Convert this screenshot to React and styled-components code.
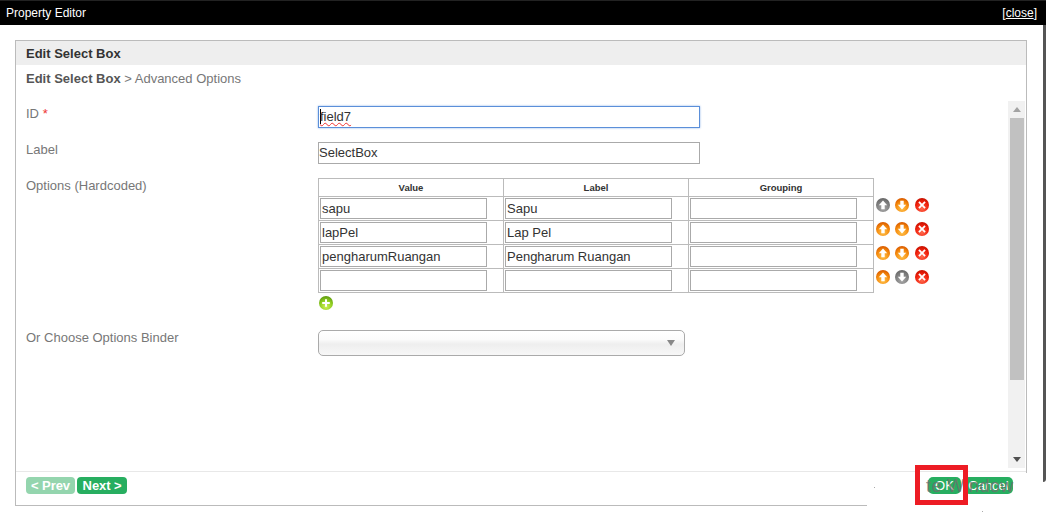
import React from 'react';
import styled, { createGlobalStyle } from 'styled-components';

const GlobalStyle = createGlobalStyle`
  html, body {
    margin: 0;
    padding: 0;
    background: #fff;
    overflow: hidden;
  }
  body {
    font-family: "Liberation Sans", Arial, sans-serif;
  }
`;

const Page = styled.div`
  position: relative;
  width: 1046px;
  height: 521px;
  overflow: hidden;
  background: #fff;
`;

const TitleBar = styled.div`
  height: 25px;
  box-sizing: border-box;
  padding: 0 9px 0 6px;
  display: flex;
  align-items: center;
  justify-content: space-between;
  background: #000;
  border-top: 1px solid #222;
  color: #fff;
  font-size: 12px;
`;

const CloseLink = styled.span`
  u { text-underline-offset: 1px; }
`;

const Dialog = styled.div`
  height: 457px;
  padding: 15px 16px 0 15px;
  box-sizing: border-box;
  border-right: 3px solid #555;
  border-bottom-right-radius: 3px;
`;

const Panel = styled.div`
  width: 1012px;
  height: 466px;
  box-sizing: border-box;
  border: 1px solid #bbb;
  display: flex;
  flex-direction: column;
`;

const PanelHeader = styled.div`
  height: 24px;
  padding: 0 10px;
  display: flex;
  align-items: center;
  background: #eee;
  color: #333;
  font-size: 13px;
  font-weight: bold;
  flex: none;
`;

const Crumb = styled.div`
  height: 36px;
  flex: none;
  padding: 6px 10px 0;
  box-sizing: border-box;
  font-size: 13px;
  color: #777;
  b { color: #555; }
`;

const Middle = styled.div`
  flex: 1;
  display: flex;
  min-height: 0;
  padding-right: 1px;
`;

const Form = styled.div`
  flex: 1;
  padding: 5px 0 0 10px;
`;

const Row = styled.div`
  display: grid;
  grid-template-columns: 292px 1fr;
  margin-bottom: ${p => p.$gap}px;
`;

const FieldLabel = styled.div`
  font-size: 13px;
  line-height: 15px;
  color: #777;
  i {
    color: #e33;
    font-style: normal;
  }
`;

const TextBox = styled.div`
  width: 382px;
  height: 22px;
  box-sizing: border-box;
  padding-left: ${p => (p.$focused ? 1 : 0)}px;
  font-size: 13px;
  line-height: 20px;
  color: #333;
  border: 1px solid ${p => (p.$focused ? '#5b8fd9' : '#aaa')};
  box-shadow: ${p => (p.$focused ? '0 0 2px #8fb4ea' : 'none')};
`;

const Caret = styled.span`
  display: inline-block;
  width: 1px;
  height: 15px;
  margin-right: -1px;
  vertical-align: -3px;
  background: #000;
`;

const Misspelled = styled.span`
  text-decoration: underline wavy #e33 1px;
`;

const TableWrap = styled.div`
  display: flex;
  align-items: flex-start;
`;

const OptionsTable = styled.table`
  width: 556px;
  table-layout: fixed;
  border-collapse: collapse;
  th, td {
    border: 1px solid #bbb;
    padding: 0;
  }
  th {
    height: 17px;
    font-size: 9.5px;
    color: #333;
  }
  td {
    height: 23px;
    padding: 0 0 0 1px;
  }
`;

const CellInput = styled.div`
  width: 167px;
  height: 21px;
  box-sizing: border-box;
  padding-left: 1px;
  font-size: 13px;
  line-height: 19px;
  color: #333;
  border: 1px solid #aaa;
`;

const ActionColumn = styled.div`
  display: flex;
  flex-direction: column;
  padding: 15px 0 0 2px;
`;

const ActionRow = styled.div`
  height: 24px;
  display: flex;
  align-items: center;
  gap: 5px;
  svg:last-child { margin-left: 1px; }
`;

const AddRow = styled.div`
  height: 15px;
  padding: 3px 0 0 1px;
`;

const SelectBox = styled.div`
  width: 367px;
  height: 26px;
  box-sizing: border-box;
  display: flex;
  align-items: center;
  justify-content: flex-end;
  padding-right: 9px;
  border: 1px solid #aaa;
  border-radius: 5px;
  background: linear-gradient(#fff 0%, #fbfbfb 35%, #eeeeee 55%, #f7f7f7 100%);
`;

const SelectArrow = styled.span`
  width: 0;
  height: 0;
  border-left: 4px solid transparent;
  border-right: 4px solid transparent;
  border-top: 6px solid #888;
`;

const Scrollbar = styled.div`
  width: 17px;
  flex: none;
  margin-bottom: 3px;
  background: #f1f1f1;
  display: flex;
  flex-direction: column;
  align-items: center;
`;

const ScrollCap = styled.div`
  height: 17px;
  flex: none;
  display: flex;
  align-items: center;
`;

const ScrollTriangle = styled.span`
  width: 0;
  height: 0;
  border-left: 4px solid transparent;
  border-right: 4px solid transparent;
  ${p => (p.$down ? 'border-top: 5px solid #505050;' : 'border-bottom: 5px solid #a3a3a3;')}
`;

const ScrollThumb = styled.div`
  width: 14px;
  height: 262px;
  flex: none;
  background: #c1c1c1;
`;

const ScrollSpace = styled.div`
  flex: 1;
`;

const Footer = styled.div`
  height: 34px;
  flex: none;
  box-sizing: border-box;
  padding: 5px 10px 0;
  border-top: 1px solid #e8e8e8;
  display: flex;
  align-items: flex-start;
  gap: 2px;
`;

const NavButton = styled.div`
  height: 17px;
  width: ${p => p.$width}px;
  border-radius: 4px;
  background: ${p => (p.$disabled ? '#94d5ae' : '#27ae60')};
  color: #fff;
  font-size: 13px;
  font-weight: 600;
  letter-spacing: -0.1px;
  line-height: 17px;
  text-align: center;
`;

// white patch from the screen capture, hides the panel corner
const CornerPatch = styled.div`
  position: absolute;
  left: 867px;
  top: 473px;
  width: 176px;
  height: 48px;
  background: #fff;
`;

const Speck = styled.div`
  position: absolute;
  left: ${p => p.$left}px;
  top: ${p => p.$top}px;
  width: 1px;
  height: 1px;
  background: #aaa;
`;

const ActionButton = styled.div`
  position: absolute;
  top: 477px;
  left: ${p => p.$left}px;
  width: ${p => p.$width}px;
  height: 17px;
  border-radius: 5px;
  background: #27ae60;
  color: #fff;
  font-size: 13px;
  line-height: 17px;
  text-align: center;
`;

const GhostText = styled.div`
  position: absolute;
  left: 926px;
  top: 476px;
  font-size: 18px;
  line-height: 20px;
  letter-spacing: 0.4px;
  white-space: nowrap;
  color: rgba(110, 110, 110, 0.8);
`;

const Marker = styled.div`
  position: absolute;
  left: 915px;
  top: 465px;
  width: 53px;
  height: 40px;
  box-sizing: border-box;
  border: 5px solid #ed1c24;
`;

const TONES = {
  orange: ['#ffc34d', '#f58a0c', '#dc5f00'],
  gray: ['#a8a8a8', '#808080', '#6a6a6a'],
  red: ['#ff6a4d', '#f0200c', '#cc1200'],
  green: ['#d4f25c', '#8ccb1e', '#649f12'],
};

const ICON_PATHS = {
  up: 'M7 2.6 L11.2 7.2 H8.7 V11.2 H5.3 V7.2 H2.8 Z',
  down: 'M7 11.4 L11.2 6.8 H8.7 V2.8 H5.3 V6.8 H2.8 Z',
  remove: 'M4.6 3.3 L7 5.7 L9.4 3.3 L10.7 4.6 L8.3 7 L10.7 9.4 L9.4 10.7 L7 8.3 L4.6 10.7 L3.3 9.4 L5.7 7 L3.3 4.6 Z',
  add: 'M6 3.2 H8 V6 H10.8 V8 H8 V10.8 H6 V8 H3.2 V6 H6 Z',
};

const RoundIcon = ({ kind, tone }) => {
  const [a, b, c] = TONES[tone];
  const id = `grad-${tone}`;
  return (
    <svg width="14" height="14" viewBox="0 0 14 14" style={{ display: 'block', flex: 'none' }}>
      <defs>
        <radialGradient id={id} cx="50%" cy="75%" r="70%">
          <stop offset="0%" stopColor={a} />
          <stop offset="65%" stopColor={b} />
          <stop offset="100%" stopColor={c} />
        </radialGradient>
      </defs>
      <circle cx="7" cy="7" r="7" fill={`url(#${id})`} />
      <path d={ICON_PATHS[kind]} fill="#fff" />
    </svg>
  );
};

const rows = [
  { value: 'sapu', label: 'Sapu', up: 'gray', down: 'orange' },
  { value: 'lapPel', label: 'Lap Pel', up: 'orange', down: 'orange' },
  { value: 'pengharumRuangan', label: 'Pengharum Ruangan', up: 'orange', down: 'orange' },
  { value: '', label: '', up: 'orange', down: 'gray' },
];

const App = () => {
  return (
    <Page>
      <GlobalStyle />
      <TitleBar>
        <span>Property Editor</span>
        <CloseLink>[<u>close</u>]</CloseLink>
      </TitleBar>
      <Dialog>
        <Panel>
          <PanelHeader>Edit Select Box</PanelHeader>
          <Crumb><b>Edit Select Box</b> &gt; Advanced Options</Crumb>
          <Middle>
            <Form>
              <Row $gap={14}>
                <FieldLabel>ID <i>*</i></FieldLabel>
                <TextBox $focused><Caret /><Misspelled>field7</Misspelled></TextBox>
              </Row>
              <Row $gap={14}>
                <FieldLabel>Label</FieldLabel>
                <TextBox>SelectBox</TextBox>
              </Row>
              <Row $gap={19}>
                <FieldLabel>Options (Hardcoded)</FieldLabel>
                <div>
                  <TableWrap>
                    <OptionsTable>
                      <thead>
                        <tr><th>Value</th><th>Label</th><th>Grouping</th></tr>
                      </thead>
                      <tbody>
                        {rows.map((row, i) => (
                          <tr key={i}>
                            <td><CellInput>{row.value}</CellInput></td>
                            <td><CellInput>{row.label}</CellInput></td>
                            <td><CellInput /></td>
                          </tr>
                        ))}
                      </tbody>
                    </OptionsTable>
                    <ActionColumn>
                      {rows.map((row, i) => (
                        <ActionRow key={i}>
                          <RoundIcon kind="up" tone={row.up} />
                          <RoundIcon kind="down" tone={row.down} />
                          <RoundIcon kind="remove" tone="red" />
                        </ActionRow>
                      ))}
                    </ActionColumn>
                  </TableWrap>
                  <AddRow><RoundIcon kind="add" tone="green" /></AddRow>
                </div>
              </Row>
              <Row $gap={0}>
                <FieldLabel>Or Choose Options Binder</FieldLabel>
                <SelectBox><SelectArrow /></SelectBox>
              </Row>
            </Form>
            <Scrollbar>
              <ScrollCap><ScrollTriangle /></ScrollCap>
              <ScrollThumb />
              <ScrollSpace />
              <ScrollCap><ScrollTriangle $down /></ScrollCap>
            </Scrollbar>
          </Middle>
          <Footer>
            <NavButton $disabled $width={49}>&lt; Prev</NavButton>
            <NavButton $width={50}>Next &gt;</NavButton>
          </Footer>
        </Panel>
      </Dialog>
      <CornerPatch />
      <Speck $left={874} $top={487} />
      <Speck $left={982} $top={511} />
      <ActionButton $left={928} $width={33}>OK</ActionButton>
      <ActionButton $left={964} $width={49}>Cancel</ActionButton>
      <GhostText aria-hidden="true">te Window</GhostText>
      <Marker />
    </Page>
  );
};

export default App;
